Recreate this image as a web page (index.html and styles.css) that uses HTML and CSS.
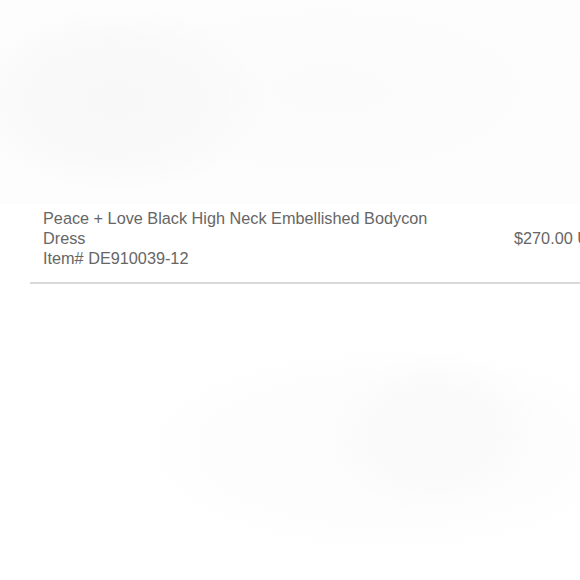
FILE: index.html
```html
<!DOCTYPE html>
<html lang="en">
<head>
    <meta charset="UTF-8">
    <meta name="viewport" content="width=device-width, initial-scale=1.0">
    <title>Order Item</title>
    <link rel="stylesheet" href="styles.css">
</head>
<body>
    <div class="hero"></div>
    <div class="order">
        <div class="item">
            <div class="info">
                <div class="name">Peace + Love Black High Neck Embellished Bodycon Dress</div>
                <div class="sku">Item# DE910039-12</div>
            </div>
            <div class="price">$270.00 USD</div>
        </div>
    </div>
    <div class="shade"></div>
</body>
</html>
```

FILE: styles.css
```css
html, body {
    margin: 0;
    padding: 0;
    background: #fff;
    overflow: hidden;
    width: 580px;
    height: 580px;
}
body {
    font-family: "Liberation Sans", Arial, sans-serif;
    color: #666;
}
.hero {
    height: 204px;
    background:
        radial-gradient(ellipse 150px 95px at 115px 100px, #f8f8f8 0%, #f9f9f9 60%, rgba(250,250,250,0) 100%),
        radial-gradient(ellipse 260px 110px at 330px 90px, #fbfbfb 0%, #fcfcfc 70%, rgba(253,253,253,0) 100%),
        #fdfdfd;
}
.order {
    padding-left: 30px;
}
.item {
    display: grid;
    grid-template-columns: 471px auto;
    align-items: center;
    padding: 4px 0 14px 13px;
    border-bottom: 2px solid #d9d9d9;
    font-size: 16.25px;
    line-height: 20px;
}
.name {
    width: 400px;
}
.price {
    white-space: nowrap;
}
.shade {
    height: 294px;
    background:
        radial-gradient(ellipse 110px 80px at 435px 150px, #f9f9f9 0%, #fafafa 50%, rgba(251,251,251,0) 100%),
        radial-gradient(ellipse 270px 110px at 390px 165px, #fcfcfc 0%, #fdfdfd 60%, rgba(255,255,255,0) 100%),
        #fff;
}
```
